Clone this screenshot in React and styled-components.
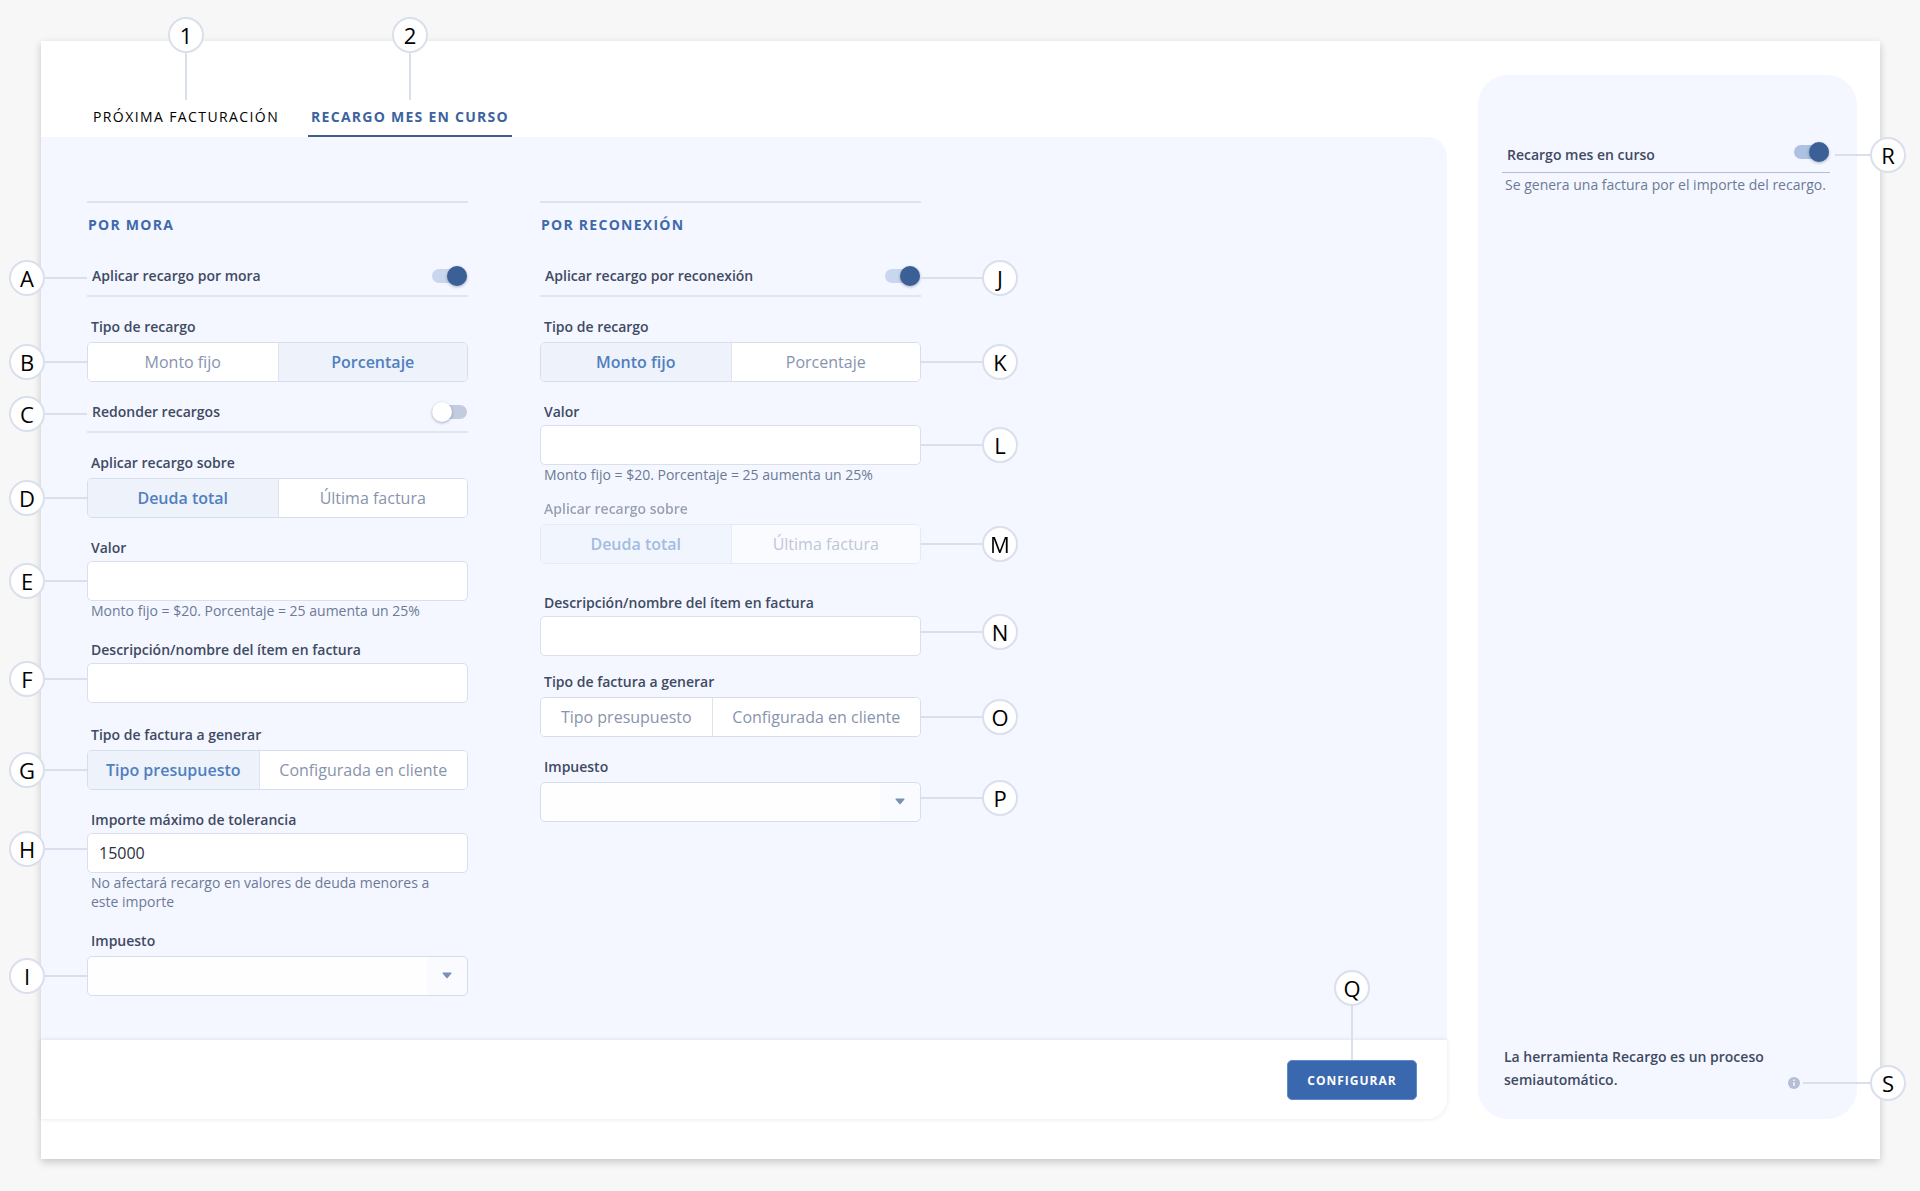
import React, { useId, useState } from "react";
import styled, { createGlobalStyle, css } from "styled-components";

const GlobalStyle = createGlobalStyle`
  * {
    box-sizing: border-box;
  }
  body {
    margin: 0;
    background-color: #f7f7f7;
    font-family: "Open Sans", "Noto Sans", sans-serif;
    font-size: 14px;
    line-height: 20px;
    color: #3f4a63;
  }
  button, input, select {
    font-family: inherit;
  }
`;

const Page = styled.div`
  min-height: 100vh;
  padding: 41px 40px 32px 41px;
`;

const Card = styled.div`
  display: flex;
  gap: 31px;
  padding: 0 23px 40px 0;
  background-color: #fff;
  box-shadow: 0 3px 8px rgba(0, 0, 0, 0.2);
`;

const Main = styled.main`
  flex: 1;
  min-width: 0;
  display: flex;
  flex-direction: column;
`;

const Tabs = styled.nav`
  display: flex;
  align-items: flex-end;
  gap: 26px;
  height: 96px;
  padding-left: 49px;
`;

const TabItem = styled.div`
  position: relative;
`;

const Tab = styled.button`
  display: block;
  padding: 0 3px 8px;
  border: none;
  border-bottom: 2px solid ${({ $active }) => ($active ? "#3f5f92" : "transparent")};
  background: none;
  color: ${({ $active }) => ($active ? "#3c639e" : "#000")};
  font-size: 14px;
  font-weight: ${({ $active }) => ($active ? 700 : 400)};
  line-height: 20px;
  letter-spacing: ${({ $active }) => ($active ? "0.09em" : "0.1em")};
  cursor: pointer;
`;

const Panel = styled.section`
  display: flex;
  flex: 1;
  align-items: flex-start;
  gap: 72px;
  padding: 64px 46px 44px;
  border-radius: 0 20px 0 0;
  background-color: #f4f7ff;
`;

const Column = styled.div`
  display: flex;
  flex: 0 1 381px;
  flex-direction: column;
  min-width: 0;
  border-top: 2px solid #dce3f0;
`;

const Heading = styled.h2`
  margin: 12px 0 31px;
  padding-left: 1px;
  color: #3f69ab;
  font-size: 14px;
  font-weight: 700;
  line-height: 20px;
  letter-spacing: 0.09em;
`;

const Footer = styled.footer`
  display: flex;
  justify-content: flex-end;
  padding: 20px 30px 19px;
  border-radius: 0 0 20px 0;
  background-color: #fff;
  box-shadow: 0 0 5px rgba(0, 0, 0, 0.1);
`;

const SubmitItem = styled.div`
  position: relative;
`;

const Submit = styled.button`
  width: 130px;
  height: 40px;
  border: 1px solid #5f8acb;
  border-radius: 5px;
  background-color: #3968ae;
  color: #fff;
  font-size: 12px;
  font-weight: 700;
  letter-spacing: 1px;
  cursor: pointer;
`;

const Field = styled.div`
  display: flex;
  flex-direction: column;
  margin-top: ${({ $gap }) => $gap || 20}px;
  opacity: ${({ $faded }) => ($faded ? 0.5 : 1)};
`;

const labelText = css`
  color: #3f4a63;
  font-size: 14px;
  font-weight: 600;
  line-height: 20px;
`;

const Label = styled.label`
  ${labelText}
  padding-left: 4px;
  margin-bottom: ${({ $tight }) => ($tight ? 3 : 5)}px;
`;

const Hint = styled.p`
  margin: 0;
  padding: 0 20px 0 4px;
  color: #6c7a96;
  font-size: 14px;
  line-height: 19px;
`;

const Control = styled.div`
  position: relative;
`;

const Segmented = styled.div`
  display: grid;
  grid-template-columns: ${({ $columns }) => $columns || "1fr 1fr"};
  height: 40px;
  border: 1px solid #d6ddeb;
  border-radius: 5px;
  background-color: #fff;
  overflow: hidden;
`;

const Segment = styled.button`
  padding: 0;
  border: none;
  background-color: ${({ $active }) => ($active ? "#eef2fa" : "#fff")};
  color: ${({ $active }) => ($active ? "#507fc1" : "#8794ad")};
  font-size: 16px;
  font-weight: ${({ $active }) => ($active ? 600 : 400)};
  line-height: 22px;
  white-space: nowrap;
  cursor: pointer;

  & + & {
    border-left: 1px solid #dde3ef;
  }
`;

const Input = styled.input`
  display: block;
  width: 100%;
  height: 40px;
  padding: 0 11px;
  border: 1px solid #d9dfed;
  border-radius: 5px;
  background-color: #fff;
  color: #2b3242;
  font-size: 16px;
`;

const Select = styled.select`
  display: block;
  width: 100%;
  height: 40px;
  padding: 0 48px 0 11px;
  border: 1px solid #d6ddeb;
  border-radius: 5px;
  appearance: none;
  background: linear-gradient(to left, #f9fbff 40px, #fefefe 40px);
  color: #2b3242;
  font-size: 16px;
`;

const Caret = styled.svg`
  position: absolute;
  top: 16px;
  right: 16px;
  width: 10px;
  height: 7px;
  pointer-events: none;
`;

const Row = styled.div`
  position: relative;
  display: flex;
  align-items: ${({ $align }) => $align || "center"};
  justify-content: space-between;
  padding: 0 1px ${({ $dark }) => ($dark ? 7 : 9)}px 5px;
  border-bottom: ${({ $dark }) => ($dark ? "1px solid #b3bed5" : "2px solid #e0e6f1")};
  margin-top: ${({ $gap }) => $gap || 0}px;
`;

const RowLabel = styled.label`
  ${labelText}
`;

const Switch = styled.input.attrs({ type: "checkbox" })`
  display: flex;
  align-items: center;
  flex-shrink: 0;
  width: 35px;
  height: 14px;
  margin: 0;
  border-radius: 7px;
  appearance: none;
  background-color: #c3ccde;
  cursor: pointer;

  &::before {
    content: "";
    flex-shrink: 0;
    width: 20px;
    height: 20px;
    border-radius: 50%;
    background-color: #fff;
    box-shadow: 0 1px 3px rgba(40, 60, 100, 0.4);
  }

  &:checked {
    background-color: ${({ $strong }) => ($strong ? "#adc1e1" : "#c9d6ed")};
  }

  &:checked::before {
    margin-left: auto;
    background-color: #3a6097;
  }
`;

const Aside = styled.aside`
  display: flex;
  flex: 0 0 379px;
  flex-direction: column;
  margin-top: 34px;
  padding: 70px 27px 28px 24px;
  border-radius: 30px;
  background-color: #f4f7ff;
`;

const AsideHint = styled(Hint)`
  padding: 2px 0 0 3px;
  white-space: nowrap;
`;

const Note = styled.div`
  display: flex;
  align-items: flex-end;
  justify-content: space-between;
  margin-top: auto;
  padding: 0 30px 0 2px;
`;

const NoteText = styled.p`
  ${labelText}
  max-width: 270px;
  margin: 0;
  line-height: 23px;
`;

const InfoItem = styled.span`
  position: relative;
  display: flex;
  width: 12px;
  height: 12px;
  margin-bottom: 2px;
`;

// Marcador: circulo con letra y linea hasta el control
const markerSides = {
  left: css`
    right: 100%;
    top: 50%;
    transform: translateY(-50%);
  `,
  right: css`
    left: 100%;
    top: 50%;
    flex-direction: row-reverse;
    transform: translateY(-50%);
  `,
  top: css`
    left: 50%;
    bottom: 100%;
    flex-direction: column;
    transform: translateX(-50%);
  `,
};

const MarkerBox = styled.span`
  position: absolute;
  z-index: 2;
  display: flex;
  align-items: center;
  pointer-events: none;
  ${({ $side }) => markerSides[$side]}
  ${({ $raised }) => $raised && "margin-top: -4px;"}
  ${({ $rowTop }) => $rowTop && `top: ${$rowTop}px;`}
  ${({ $space, $side }) => $space && `margin-${$side === "top" ? "bottom" : "left"}: ${$space}px;`}
`;

const MarkerCircle = styled.span`
  display: flex;
  align-items: center;
  justify-content: center;
  width: 36px;
  height: 36px;
  border: 2px solid #d9dfec;
  border-radius: 50%;
  background-color: #fff;
  color: #000;
  font-size: 22px;
  font-weight: 400;
  line-height: 28px;
`;

const MarkerLine = styled.span`
  width: ${({ $side, $length }) => ($side === "top" ? 2 : $length)}px;
  height: ${({ $side, $length }) => ($side === "top" ? $length : 2)}px;
  background-color: #d9dfec;
`;

const Marker = ({ name, side = "left", length, ...rest }) => (
  <MarkerBox $side={side} {...rest}>
    <MarkerCircle>{name}</MarkerCircle>
    <MarkerLine $side={side} $length={length || (side === "left" ? 42 : 61)} />
  </MarkerBox>
);

const ToggleField = ({ label, marker, side, initial, gap }) => {
  const id = useId();
  const [checked, setChecked] = useState(initial);

  return (
    <Row $gap={gap}>
      <RowLabel htmlFor={id}>{label}</RowLabel>
      <Switch id={id} checked={checked} onChange={(e) => setChecked(e.target.checked)} />
      <Marker name={marker} side={side} $rowTop={12} />
    </Row>
  );
};

// Cubre el control (40px) sin heredar la opacidad del campo
const SegmentMarker = styled.div`
  position: absolute;
  right: 0;
  bottom: 0;
  left: 0;
  height: 40px;
  pointer-events: none;
`;

const SegmentedField = ({ label, options, initial, columns, marker, side, gap, disabled }) => {
  const id = useId();
  const [value, setValue] = useState(initial);

  return (
    <Control>
      <Field $gap={gap} $faded={disabled}>
        <Label as="span" id={id}>{label}</Label>
        <Segmented role="group" aria-labelledby={id} $columns={columns}>
          {options.map((option) => (
            <Segment
              key={option}
              type="button"
              disabled={disabled}
              aria-pressed={option === value}
              $active={option === value}
              onClick={() => setValue(option)}
            >
              {option}
            </Segment>
          ))}
        </Segmented>
      </Field>
      <SegmentMarker>
        <Marker name={marker} side={side} />
      </SegmentMarker>
    </Control>
  );
};

const TextField = ({ label, hint, initial = "", marker, side, gap, raised }) => {
  const id = useId();
  const [value, setValue] = useState(initial);

  return (
    <Field $gap={gap}>
      <Label htmlFor={id} $tight>{label}</Label>
      <Control>
        <Input id={id} value={value} onChange={(e) => setValue(e.target.value)} />
        <Marker name={marker} side={side} $raised={raised} />
      </Control>
      {hint && <Hint>{hint}</Hint>}
    </Field>
  );
};

const SelectField = ({ label, marker, side, gap, raised }) => {
  const id = useId();

  return (
    <Field $gap={gap}>
      <Label htmlFor={id}>{label}</Label>
      <Control>
        <Select id={id} defaultValue="">
          <option value=""></option>
        </Select>
        <Caret viewBox="0 0 10 7" aria-hidden="true">
          <path d="M1 .5h8c.5 0 .7.5.4.9L5.6 6c-.3.4-.9.4-1.2 0L.6 1.4C.3 1 .5.5 1 .5z" fill="#7c8fb5" />
        </Caret>
        <Marker name={marker} side={side} $raised={raised} />
      </Control>
    </Field>
  );
};

const tabs = [
  { name: "PRÓXIMA FACTURACIÓN", marker: "1" },
  { name: "RECARGO MES EN CURSO", marker: "2" },
];

const tipos = ["Monto fijo", "Porcentaje"];
const bases = ["Deuda total", "Última factura"];
const facturas = ["Tipo presupuesto", "Configurada en cliente"];
const ayudaValor = "Monto fijo = $20. Porcentaje = 25 aumenta un 25%";

const App = () => {
  const [tab, setTab] = useState(tabs[1].name);
  const [recargo, setRecargo] = useState(true);

  return (
    <Page>
      <GlobalStyle />
      <Card>
        <Main>
          <Tabs>
            {tabs.map(({ name, marker }) => (
              <TabItem key={name}>
                <Tab type="button" $active={tab === name} onClick={() => setTab(name)}>
                  {name}
                </Tab>
                <Marker name={marker} side="top" length={47} $space={7} />
              </TabItem>
            ))}
          </Tabs>
          <Panel>
            <Column>
              <Heading>POR MORA</Heading>
              <ToggleField label="Aplicar recargo por mora" marker="A" initial={true} />
              <SegmentedField label="Tipo de recargo" options={tipos} initial="Porcentaje" marker="B" />
              <ToggleField label="Redonder recargos" marker="C" initial={false} gap={20} />
              <SegmentedField label="Aplicar recargo sobre" options={bases} initial="Deuda total" marker="D" />
              <TextField label="Valor" hint={ayudaValor} marker="E" />
              <TextField label="Descripción/nombre del ítem en factura" marker="F" raised />
              <SegmentedField
                label="Tipo de factura a generar"
                options={facturas}
                initial="Tipo presupuesto"
                columns="9fr 11fr"
                marker="G"
                gap={22}
              />
              <TextField
                label="Importe máximo de tolerancia"
                initial="15000"
                hint="No afectará recargo en valores de deuda menores a este importe"
                marker="H"
                raised
              />
              <SelectField label="Impuesto" marker="I" />
            </Column>
            <Column>
              <Heading>POR RECONEXIÓN</Heading>
              <ToggleField label="Aplicar recargo por reconexión" marker="J" side="right" initial={true} />
              <SegmentedField label="Tipo de recargo" options={tipos} initial="Monto fijo" marker="K" side="right" />
              <TextField label="Valor" hint={ayudaValor} marker="L" side="right" />
              <SegmentedField
                label="Aplicar recargo sobre"
                options={bases}
                initial="Deuda total"
                marker="M"
                side="right"
                gap={15}
                disabled
              />
              <TextField label="Descripción/nombre del ítem en factura" marker="N" side="right" gap={29} raised />
              <SegmentedField
                label="Tipo de factura a generar"
                options={facturas}
                columns="9fr 11fr"
                marker="O"
                side="right"
                gap={16}
              />
              <SelectField label="Impuesto" marker="P" side="right" raised />
            </Column>
          </Panel>
          <Footer>
            <SubmitItem>
              <Submit type="button">CONFIGURAR</Submit>
              <Marker name="Q" side="top" length={54} />
            </SubmitItem>
          </Footer>
        </Main>
        <Aside>
          <Row $align="flex-start" $dark>
            <RowLabel htmlFor="recargo-mes">Recargo mes en curso</RowLabel>
            <Switch
              id="recargo-mes"
              $strong
              checked={recargo}
              onChange={(e) => setRecargo(e.target.checked)}
            />
            <Marker name="R" side="right" length={35} $rowTop={10} $space={5} />
          </Row>
          <AsideHint>Se genera una factura por el importe del recargo.</AsideHint>
          <Note>
            <NoteText>La herramienta Recargo es un proceso semiautomático.</NoteText>
            <InfoItem>
              <svg viewBox="0 0 12 12" width="12" height="12" aria-hidden="true">
                <circle cx="6" cy="6" r="6" fill="#b4bfd5" />
                <path d="M6 5.2v3.6M6 2.6v1.4" stroke="#f4f7ff" strokeWidth="1.6" />
              </svg>
              <Marker name="S" side="right" length={67} $space={3} />
            </InfoItem>
          </Note>
        </Aside>
      </Card>
    </Page>
  );
};

export default App;
